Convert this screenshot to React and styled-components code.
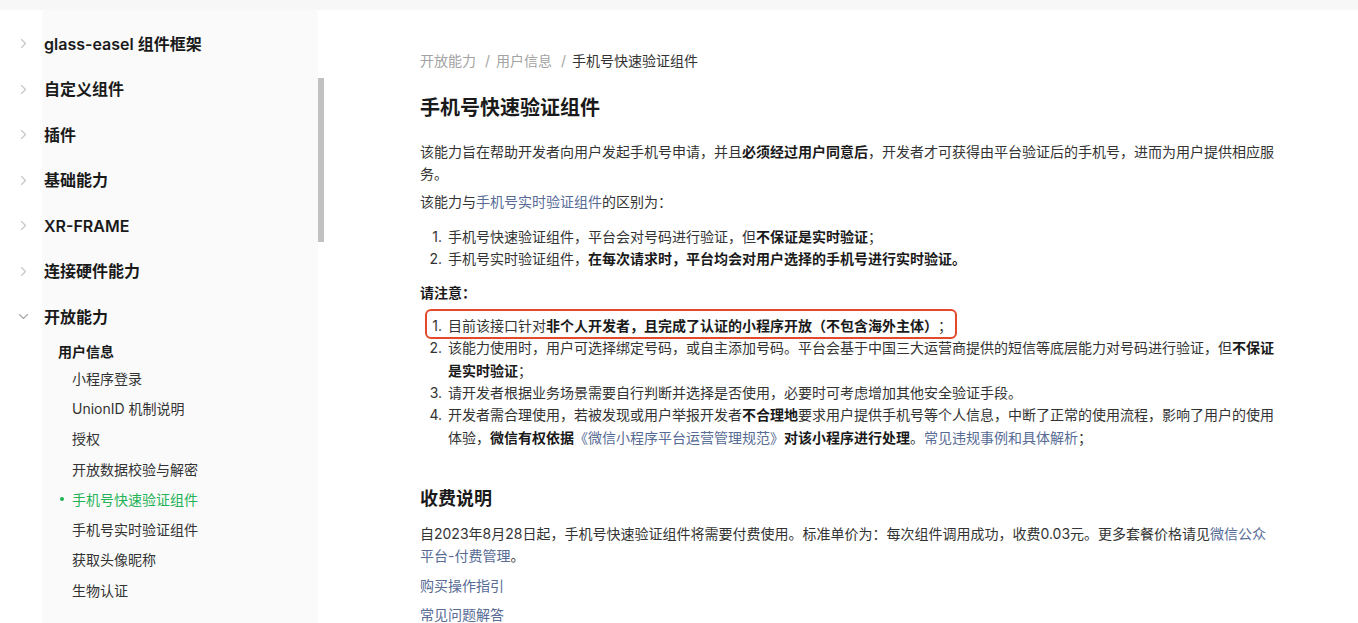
import React from 'react';
import styled, { createGlobalStyle } from 'styled-components';

const GlobalStyle = createGlobalStyle`
  html, body {
    margin: 0;
    padding: 0;
    height: 623px;
    overflow: hidden;
    background: #fff;
  }
  body {
    font-family: Inter, "Noto Sans CJK SC", sans-serif;
    color: #333;
    text-spacing-trim: space-all;
    -webkit-font-smoothing: antialiased;
  }
  * { box-sizing: border-box; }
`;

const Page = styled.div`
  display: flex;
  flex-direction: column;
  height: 623px;
`;

const TopBar = styled.div`
  flex: none;
  height: 10px;
  background: #f7f7f7;
`;

const Body = styled.div`
  display: flex;
  flex: 1;
  min-height: 0;
`;

const Sidebar = styled.aside`
  flex: none;
  width: 318px;
  padding-top: 11px;
  background: linear-gradient(to right, #fff 42px, #fafafa 42px);
`;

const ScrollTrack = styled.div`
  flex: none;
  width: 6px;
  padding-top: 68px;
`;

const Thumb = styled.div`
  height: 164px;
  background: #c1c1c1;
`;

const NavRow = styled.div`
  display: flex;
  align-items: center;
  height: 45.5px;
`;

const Caret = styled.span`
  flex: none;
  width: 44px;
  display: flex;
  justify-content: center;
  padding-left: 2px;
`;

const NavLabel = styled.span`
  font-size: 16px;
  font-weight: 600;
  color: #1a1a1a;
  line-height: 22px;
`;

const SubHeading = styled.div`
  margin-top: 1px;
  padding-left: 58px;
  font-size: 14px;
  font-weight: 600;
  line-height: 22px;
  color: #1a1a1a;
`;

const SubItem = styled.div`
  display: flex;
  align-items: center;
  height: 30.3px;
  padding-left: 60px;
  font-size: 14px;
  color: ${(p) => (p.$active ? '#1fb356' : '#333')};
`;

const Dot = styled.span`
  flex: none;
  width: 12px;
  display: flex;
  align-items: center;
  &::before {
    content: '';
    width: 4px;
    height: 4px;
    border-radius: 50%;
    background: ${(p) => (p.$active ? '#1fb356' : 'transparent')};
  }
`;

const Main = styled.main`
  flex: none;
  width: 857px;
  margin-left: 96px;
  padding-top: 40px;
`;

const Breadcrumb = styled.div`
  font-size: 14px;
  line-height: 22px;
  color: #a3a3a3;
`;

const Sep = styled.span`
  margin: 0 6px 0 9px;
  color: #a3a3a3;
`;

const Current = styled.span`
  color: #333;
`;

const Title = styled.h1`
  margin: 22px 0 0;
  font-size: 20px;
  line-height: 28px;
  font-weight: 600;
  color: #1a1a1a;
`;

const H2 = styled.h2`
  margin: 36.8px 0 0;
  font-size: 18px;
  line-height: 26px;
  font-weight: 600;
  color: #1a1a1a;
`;

const P = styled.p`
  margin: ${(p) => p.$gap ?? 6}px 0 0;
  font-size: 14px;
  line-height: 22.4px;
  color: #333;
`;

const Strong = styled.strong`
  font-weight: 600;
  color: #1a1a1a;
`;

const Link = styled.a`
  color: #576b95;
  text-decoration: none;
`;

const Keep = styled.span`
  white-space: nowrap;
`;

const List = styled.ol`
  list-style: none;
  margin: ${(p) => p.$gap ?? 12}px 0 0;
  padding: 0;
  font-size: 14px;
  line-height: 22.4px;
  color: #333;
`;

const Item = styled.li`
  display: flex;
  ${(p) =>
    p.$highlight &&
    `
    width: fit-content;
    margin: -6px 0 -2px 5px;
    padding: 4px 3px 0 0;
    border: 2px solid #e5492c;
    border-radius: 6px;
  `}
`;

const Marker = styled.span`
  flex: 0 0 ${(p) => (p.$highlight ? 21 : 28)}px;
  text-align: right;
  padding-right: 6px;
`;

const ItemText = styled.span`
  flex: 1;
`;

const ChevronRight = () => (
  <svg width="7" height="11" viewBox="0 0 7 11" fill="none">
    <polyline points="1.5,1.5 5.5,5.5 1.5,9.5" stroke="#c6c6c6" strokeWidth="1.1" strokeLinecap="round" strokeLinejoin="round" />
  </svg>
);

const ChevronDown = () => (
  <svg width="11" height="7" viewBox="0 0 11 7" fill="none">
    <polyline points="1.5,1.5 5.5,5.5 9.5,1.5" stroke="#a8a8a8" strokeWidth="1.1" strokeLinecap="round" strokeLinejoin="round" />
  </svg>
);

const topItems = ['glass-easel 组件框架', '自定义组件', '插件', '基础能力', 'XR-FRAME', '连接硬件能力'];
const subItems = [
  '小程序登录',
  'UnionID 机制说明',
  '授权',
  '开放数据校验与解密',
  '手机号快速验证组件',
  '手机号实时验证组件',
  '获取头像昵称',
  '生物认证',
];

export default function App() {
  return (
    <>
      <GlobalStyle />
      <Page>
        <TopBar />
        <Body>
          <Sidebar>
            {topItems.map((t) => (
              <NavRow key={t}>
                <Caret><ChevronRight /></Caret>
                <NavLabel>{t}</NavLabel>
              </NavRow>
            ))}
            <NavRow>
              <Caret><ChevronDown /></Caret>
              <NavLabel>开放能力</NavLabel>
            </NavRow>
            <SubHeading>用户信息</SubHeading>
            {subItems.map((t) => {
              const active = t === '手机号快速验证组件';
              return (
                <SubItem key={t} $active={active}>
                  <Dot $active={active} />
                  {t}
                </SubItem>
              );
            })}
          </Sidebar>
          <ScrollTrack>
            <Thumb />
          </ScrollTrack>
          <Main>
            <Breadcrumb>
              开放能力<Sep>/</Sep>用户信息<Sep>/</Sep><Current>手机号快速验证组件</Current>
            </Breadcrumb>
            <Title>手机号快速验证组件</Title>
            <P $gap={19}>
              该能力旨在帮助开发者向用户发起手机号申请，并且<Strong>必须经过用户同意后</Strong>，开发者才可获得由平台验证后的手机号，进而为用户提供相应服务。
            </P>
            <P $gap={5}>
              该能力与<Link href="#">手机号实时验证组件</Link>的区别为：
            </P>
            <List $gap={12.6}>
              <Item>
                <Marker>1.</Marker>
                <ItemText>手机号快速验证组件，平台会对号码进行验证，但<Strong>不保证是实时验证</Strong>；</ItemText>
              </Item>
              <Item>
                <Marker>2.</Marker>
                <ItemText>手机号实时验证组件，<Strong>在每次请求时，平台均会对用户选择的手机号进行实时验证。</Strong></ItemText>
              </Item>
            </List>
            <P $gap={11.2}>
              <Strong>请注意：</Strong>
            </P>
            <List $gap={10.6}>
              <Item $highlight>
                <Marker $highlight>1.</Marker>
                <ItemText>目前该接口针对<Strong>非个人开发者，且完成了认证的小程序开放（不包含海外主体）</Strong>；</ItemText>
              </Item>
              <Item>
                <Marker>2.</Marker>
                <ItemText>该能力使用时，用户可选择绑定号码，或自主添加号码。平台会基于中国三大运营商提供的短信等底层能力对号码进行验证，但<Strong>不保证是实时验证</Strong>；</ItemText>
              </Item>
              <Item>
                <Marker>3.</Marker>
                <ItemText>请开发者根据业务场景需要自行判断并选择是否使用，必要时可考虑增加其他安全验证手段。</ItemText>
              </Item>
              <Item>
                <Marker>4.</Marker>
                <ItemText>
                  开发者需合理使用，若被发现或用户举报开发者<Strong>不合理地</Strong>要求用户提供手机号等个人信息，中断了正常的使用流程，影响了用户的使用<Keep>体验</Keep>，<Strong>微信有权依据</Strong><Link href="#">《微信小程序平台运营管理规范》</Link><Strong>对该小程序进行处理</Strong>。<Link href="#">常见违规事例和具体解析</Link>；
                </ItemText>
              </Item>
            </List>
            <H2>收费说明</H2>
            <P $gap={10.8}>
              自2023年8月28日起，手机号快速验证组件将需要付费使用。标准单价为：每次组件调用成功，收费0.03元。更多套餐价格请见<Link href="#">微信公众平台-付费管理</Link>。
            </P>
            <P $gap={7.2}>
              <Link href="#">购买操作指引</Link>
            </P>
            <P $gap={6.6}>
              <Link href="#">常见问题解答</Link>
            </P>
          </Main>
        </Body>
      </Page>
    </>
  );
}
